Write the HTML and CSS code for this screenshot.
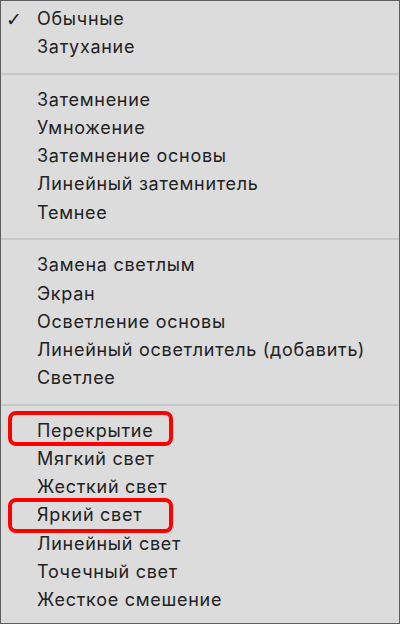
FILE: index.html
```html
<!DOCTYPE html>
<html>
<head>
    <title>Режимы наложения</title>
    <meta name="viewport" content="width=device-width, initial-scale=1.0">
    <link rel="stylesheet" href="styles.css">
</head>
<body>
    <ul class="menu">
        <li class="item checked">Обычные</li>
        <li class="item">Затухание</li>
        <li class="sep"></li>
        <li class="item">Затемнение</li>
        <li class="item">Умножение</li>
        <li class="item">Затемнение основы</li>
        <li class="item">Линейный затемнитель</li>
        <li class="item">Темнее</li>
        <li class="sep"></li>
        <li class="item">Замена светлым</li>
        <li class="item">Экран</li>
        <li class="item">Осветление основы</li>
        <li class="item">Линейный осветлитель (добавить)</li>
        <li class="item">Светлее</li>
        <li class="sep"></li>
        <li class="item marked up">Перекрытие</li>
        <li class="item">Мягкий свет</li>
        <li class="item">Жесткий свет</li>
        <li class="item marked">Яркий свет</li>
        <li class="item">Линейный свет</li>
        <li class="item">Точечный свет</li>
        <li class="item">Жесткое смешение</li>
    </ul>
</body>
</html>
```

FILE: styles.css
```css
html, body {
    margin: 0;
    height: 100%;
}

body {
    background: #dcdcdc;
    font-family: Inter, 'Liberation Sans', sans-serif;
    color: #222;
    box-sizing: border-box;
    border: 1px solid #5e5e5e;
    overflow: hidden;
}

/* Menu */
.menu {
    list-style: none;
    margin: 0;
    padding: 4px 0 0 0;
}

.item {
    position: relative;
    height: 28.2px;
    line-height: 28.2px;
    padding-left: 36px;
    font-size: 18px;
    letter-spacing: 0.72px;
    white-space: nowrap;
}

.checked::before {
    content: '✓';
    position: absolute;
    left: 5px;
    top: 0;
    font-family: 'DejaVu Sans', sans-serif;
    font-size: 19px;
    letter-spacing: 0;
}

.sep {
    height: 2px;
    margin: 11.25px 0;
    background: #c8c8c8;
}

/* Red highlight frames */
.marked::after {
    content: '';
    position: absolute;
    left: 7px;
    width: 157px;
    top: -3.5px;
    bottom: -3.5px;
    border: 4px solid #ff0000;
    border-radius: 8px;
}

.marked.up::after {
    top: -6px;
    bottom: -1px;
}
```
